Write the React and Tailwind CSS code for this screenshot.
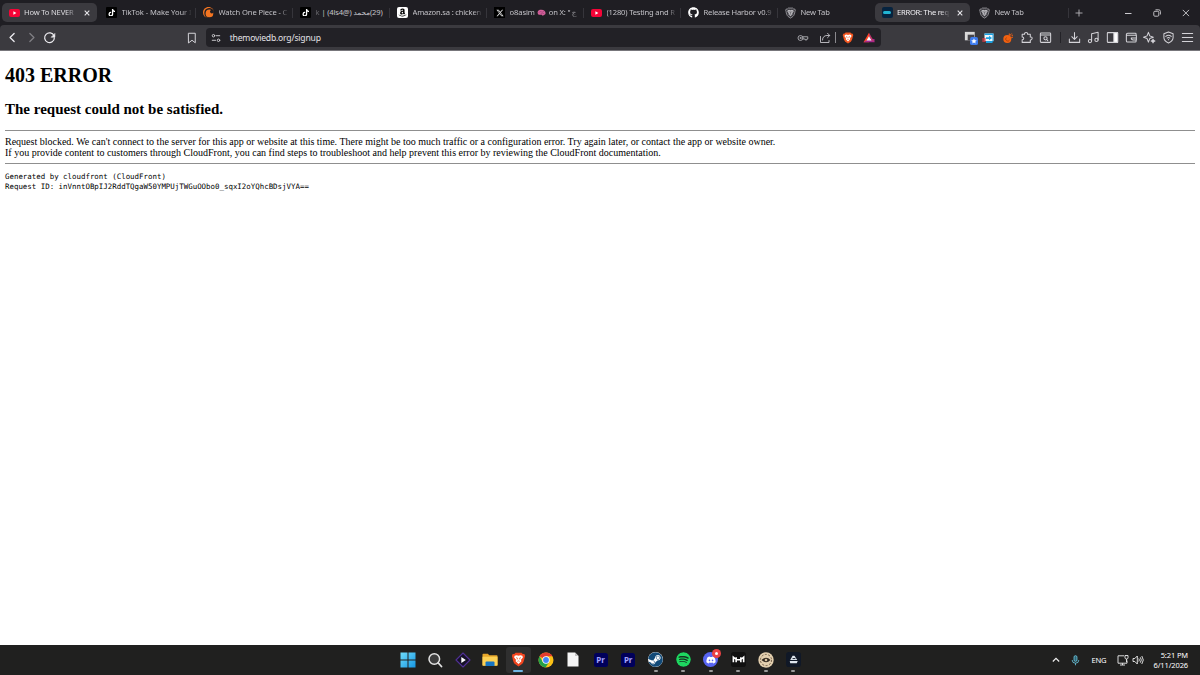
import React from "react";
import { FaTiktok, FaXTwitter, FaGithub, FaSteam, FaSpotify, FaDiscord, FaAmazon } from "react-icons/fa6";
import { SiCrunchyroll } from "react-icons/si";

const SHIELD = "M7.2 1.2 L16.8 1.2 L18.8 3.2 L21.4 3.3 L22.6 6.4 L21.8 8.6 C21 13 20 17 17.6 19.3 L12 23.2 L6.4 19.3 C4 17 3 13 2.2 8.6 L1.4 6.4 L2.6 3.3 L5.2 3.2 Z";
const FACE = "M5.8 6 L9 5 L12 6 L15 5 L18.2 6 L19 8.6 L16 12.4 L16.6 14.6 L12 19 L7.4 14.6 L8 12.4 L5 8.6 Z";

function Brave({ className, body, face, line }) {
  return (
    <svg viewBox="0 0 24 24" className={className}>
      <path d={SHIELD} fill={body} />
      <path d={FACE} fill={face} />
      <path d="M8 9 L10.3 9.7 L10 12 M16 9 L13.7 9.7 L14 12 M10.2 15 L12 14.2 L13.8 15" stroke={line} strokeWidth="1.1" fill="none" />
    </svg>
  );
}

function GreyBrave() {
  return (
    <svg viewBox="0 0 24 24" className="h-[12px] w-[11px]">
      <path d={SHIELD} fill="#3a393f" stroke="#aaa9ae" strokeWidth="1.6" />
      <path d={FACE} fill="#b9b8bd" />
      <path d="M8 9 L10.3 9.7 M16 9 L13.7 9.7 M12 9V13 M10.2 15 L12 14.2 L13.8 15" stroke="#3a393f" strokeWidth="1.2" fill="none" />
    </svg>
  );
}
const YouTube = () => (
  <svg viewBox="0 0 11 8" className="h-2 w-[11px]"><rect width="11" height="8" rx="2" fill="#f50437" /><path d="M4.4 2.2 7.4 4 4.4 5.8z" fill="#fff" /></svg>
);
const TikTok = () => (
  <span className="flex size-[11px] items-center justify-center rounded-[1px] bg-black text-[7.5px] text-white"><FaTiktok /></span>
);

const FADE = "[mask-image:linear-gradient(to_right,#000_calc(100%-10px),transparent)]";

function Tab({ icon, children, active, close, sep = true, fade = true }) {
  return (
    <div className={"flex h-[19px] w-[97px] shrink-0 items-center " + (active ? "" : "text-[#c3c2c7]")}>
      <div className={"flex h-[19px] w-[95px] items-center rounded-[5px] " + (active ? "bg-[#3b3a3f] pl-[6.5px] text-[#dddce0]" : "pl-[7px]")}>
        <span className="flex w-[11px] shrink-0 justify-center">{icon}</span>
        <span className={"ml-[4.5px] block shrink-0 overflow-hidden whitespace-nowrap text-[7.6px] leading-[19px] tracking-[-0.18px] " + (fade ? FADE : "") + (close ? " w-[53px]" : " w-[70px]")}>{children}</span>
        {close && (
          <svg viewBox="0 0 10 10" className="ml-[4.5px] size-[10px]" stroke="#e6e5e9" strokeWidth="1.1"><path d="M2.7 2.7 7.3 7.3M7.3 2.7 2.7 7.3" /></svg>
        )}
      </div>
      {sep && <span className="ml-[0.8px] h-[10px] w-px bg-[#36353b]" />}
    </div>
  );
}

function I({ children, s = 12, w = 1.9, fill = "none", color = "#d4d3d8" }) {
  return (
    <svg width={s} height={s} viewBox="0 0 24 24" fill={fill} stroke={color} strokeWidth={w} strokeLinecap="round" strokeLinejoin="round" className="shrink-0">{children}</svg>
  );
}

function TabStrip() {
  return (
    <div className="flex h-[25px] items-center pl-[2px]">
      <Tab icon={<YouTube />} active close sep={false}>How To NEVER</Tab>
      <Tab icon={<TikTok />}><span className="tracking-[-0.06px]">TikTok - Make Your I</span></Tab>
      <Tab icon={<SiCrunchyroll className="size-[11px] text-[#f47521]" />}><span className="tracking-[-0.12px]">Watch One Piece - C</span></Tab>
      <Tab icon={<TikTok />} fade={false}>
        <span className="flex gap-[2px]"><span className="opacity-40">k</span><span>| (4ls4@)</span><span className="flex"><bdi className="font-['DejaVu_Sans',sans-serif] text-[7.2px] tracking-normal">محمد</bdi><bdi>(29)</bdi></span></span>
      </Tab>
      <Tab icon={<span className="flex size-[11px] items-center justify-center rounded-[2px] bg-white text-[9px] text-black"><FaAmazon /></span>}>Amazon.sa : chicken</Tab>
      <Tab icon={<span className="flex size-[11px] items-center justify-center bg-black text-[8px] text-[#e2e2e2]"><FaXTwitter /></span>}>
        <span className="flex items-center gap-[1.5px]"><span className="tracking-[-0.1px]">o8asim</span>
          <svg viewBox="0 0 10 8" className="mx-px h-[7.5px] w-[9px]"><path d="M1 5C0 3 1.5.8 4 .7 7 .2 9.5 2 9.5 4.5 9.5 6 8.5 6.2 7.5 6.4L6.5 7.5 5.5 6.2C3 6.5 1.500 6.500 1 5z" fill="#d5609b" /><path d="M2 4q1-2 3-1t3-1M4 5q2-1 4 0" stroke="#913a6c" strokeWidth=".6" fill="none" /></svg>
          <span>on X: "</span><bdi className="font-['DejaVu_Sans',sans-serif]">ج</bdi></span>
      </Tab>
      <Tab icon={<YouTube />}>(1280) Testing and R</Tab>
      <Tab icon={<FaGithub className="size-[11px] text-white" />}>Release Harbor v0.9</Tab>
      <Tab icon={<GreyBrave />} sep={false}>New Tab</Tab>
      <Tab active close sep={false} icon={<span className="flex size-[11px] items-center justify-center rounded-[2px] bg-[#06233f]"><span className="h-[3px] w-[8px] rounded-full bg-[#21b4d2]" /></span>}>
        <span className="tracking-[-0.26px] text-[#f0eff3]">ERROR: The req</span>
      </Tab>
      <Tab icon={<GreyBrave />}>New Tab</Tab>
      <svg viewBox="0 0 10 10" className="ml-[5px] size-[10px]" stroke="#b5b4b9" strokeWidth="0.9"><path d="M5 1.500V8.500M1.500 5H8.500" /></svg>
      <div className="ml-auto flex items-center">
        <svg width="28.7" height="12" viewBox="0 0 28.7 12" stroke="#d0cfd4" strokeWidth="1"><path d="M11 6.500h6.500" /></svg>
        <svg width="28.7" height="12" viewBox="0 0 28.7 12" fill="none" stroke="#d0cfd4" strokeWidth=".9"><rect x="10.800" y="4.300" width="5" height="4.900" rx="1" /><path d="M12.500 2.800h3.200q1.700 0 1.700 1.700V7.500" /></svg>
        <svg width="28.7" height="12" viewBox="0 0 28.7 12" stroke="#d0cfd4" strokeWidth=".9"><path d="M11.800 2.900 18 9.100M18 2.900 11.800 9.100" /></svg>
      </div>
    </div>
  );
}

const Cell = ({ children }) => <span className="flex w-[18.7px] shrink-0 items-center justify-center">{children}</span>;

function Toolbar() {
  return (
    <div className="flex h-[25px] items-center rounded-t-[4px] bg-[#3b3a3f]">
      <span className="ml-[3.500px] flex"><Cell><I s={13} w={2.4} color="#ecebef"><path d="M15 4.500 7.500 12l7.500 7.500" /></I></Cell></span>
      <span className="opacity-45"><Cell><I s={13} w={2.300}><path d="M9 4.500 16.500 12 9 19.500" /></I></Cell></span>
      <span className="-ml-[0.700px] flex"><Cell><I s={13} w={2.300} color="#ecebef"><path d="M20.300 9A9 9 0 1 0 21 12.500" /><path d="M22 5v6.500h-6.500z" fill="#ecebef" strokeWidth="1" /></I></Cell></span>
      <span className="ml-[123.600px]"><Cell><I s={12} w={2}><path d="M5.500 2.500h13v19L12 16.500 5.500 21.500z" /></I></Cell></span>
      <div className="ml-[4.500px] flex h-[19px] w-[675px] items-center rounded-[4px] bg-[#222126] pl-[5px]">
        <I s={10} w={2.2}><circle cx="6" cy="6.500" r="3" /><path d="M13 6.500h8M3 17.500h8" /><circle cx="18" cy="17.500" r="3" /></I>
        <span className="ml-[9px] pt-px text-[8.600px] leading-[20px] tracking-[-0.200px] text-[#e3e2e7]">themoviedb.org/signup</span>
        <span className="ml-auto flex items-center">
          <I s={12} w={1.700} color="#b4b3b8"><circle cx="7" cy="12" r="5" /><circle cx="7" cy="12" r="1.200" /><path d="M12 9.500h9.500v4.500h-2v2h-3v-2h-4" /></I>
          <span className="ml-[9.500px] flex"><I s={12} w={1.800} color="#c4c3c8"><path d="M3 9v12h17v-4M7 16c0-6 4-9 9-9h5M17 2.500 21.500 7 17 11.500" /></I></span>
          <span className="ml-[4px] h-[11px] w-px bg-[#8a898e]" />
          <Brave className="ml-[6px] size-[12px]" body="#f2551f" face="#fff" line="#f2551f" />
          <svg viewBox="0 0 12 12" className="mr-[6px] ml-[9px] size-[12px]"><path d="M6 .8 .5 10.200H6z" fill="#ff4724" /><path d="M.5 10.200 6 7h5.500v3.200z" fill="#a3278f" /><path d="M6 .8 11.500 10.200 8.500 8.500 6 4.500z" fill="#c0356a" /><path d="M6 4.200 8.500 8.400H3.500z" fill="#fff" /></svg>
        </span>
      </div>
      <div className="ml-[80.500px] flex items-center">
        <Cell><svg viewBox="0 0 16 16" className="size-[15px]"><rect x="2" y="2" width="10.500" height="9" fill="#d9d9d9" /><rect x="5" y="5" width="7" height="6" fill="#45444a" /><rect x="7.500" y="7.500" width="8.500" height="8.500" rx="2" fill="#3d7cf0" /><path d="m11.700 8.900.9 1.900 2 .2-1.500 1.400.4 2-1.800-1-1.800 1 .4-2-1.500-1.400 2-.2z" fill="#fff" /></svg></Cell>
        <span className="-ml-[1px] mr-[1px] flex"><Cell><svg viewBox="0 0 12 12" className="size-[12px]"><rect x="2.500" y="1.500" width="9" height="7.500" fill="#eef7fc" /><path d="M2.500 1.500h9v1.500h-9zM10.500 1.500h1v8h-1zM4 9h6.500v2H4z" fill="#1ba1e2" /><path d="M4 5.200h3V3.800L10 6 7 8.300V6.900H4z" fill="#1ba1e2" /><path d="M.5 6h1.200v4H.5zM2.300 6h1.200v4H2.300z" fill="#df3945" /></svg></Cell></span>
        <Cell><svg viewBox="0 0 12 12" className="size-[12px]"><circle cx="5.300" cy="7" r="4" fill="#f26110" /><path d="M4.500 5.500a2 2 0 1 0 3 2.500" stroke="#a03c0c" strokeWidth=".8" fill="none" /><path d="M7 4.500 9.700 1.500M9 6l2-1M7.300 3V1.500M9.500 3.800l1.500-.8" stroke="#f26110" strokeWidth="1" /></svg></Cell>
        <Cell><I s={13}><path d="M4 6h4.500c-1-4.500 6.500-4.500 5.500 0h5v5c4.500-1 4.500 6 0 5.500V21H4v-5c4 0 4-5 0-5z" /></I></Cell>
        <Cell><I s={13}><rect x="2.500" y="3.500" width="19" height="17.500" rx="1.500" /><path d="M3 7.500h18" /><circle cx="12" cy="13.500" r="3" /><path d="m14.200 15.700 2 2" /></I></Cell>
        <span className="mx-[5px] h-[11px] w-px bg-[#232227]" />
        <Cell><I s={13}><path d="M12 3v12M7 10.500l5 5 5-5M2.500 15v6h19v-6" /></I></Cell>
        <Cell><I s={13}><circle cx="5.500" cy="18.500" r="3" /><circle cx="17.500" cy="16.500" r="3" /><path d="M8.500 18.500V5l12-2.500v14" /></I></Cell>
        <Cell><I s={13}><rect x="2.500" y="3" width="19" height="18" rx="1" /><path d="M14.500 3h7v18h-7z" fill="#fff" /></I></Cell>
        <Cell><I s={13}><path d="M20.500 8V5.500q0-1.500-1.500-1.500H5Q2.500 4 2.500 6.500V18q0 2.500 2.500 2.500h14q1.500 0 1.500-1.500v-2.500M2.500 8h18.500v8.500h-6q-3.500 0-3.500-3.500h9.500" /></I></Cell>
        <Cell><I s={13}><path d="M10 2.500 12.500 9 19 11.500 12.500 14 10 20.500 7.500 14 1 11.500 7.500 9z" /><path d="m18.500 15 1 2.500 2.500 1-2.500 1-1 2.500-1-2.500-2.500-1 2.500-1z" fill="#d4d3d8" /></I></Cell>
        <Cell><I s={13}><path d="M12 1.800 20.500 5v7q0 6.500-8.500 10.200Q3.500 18.500 3.500 12V5zM7 10q5-4 10 0M9.500 13q2.500-2 5 0M12 15.800v.2" /></I></Cell>
        <Cell><I s={13}><path d="M2.500 4.500h19M2.500 12h19M2.500 19.500h19" /></I></Cell>
      </div>
    </div>
  );
}

function TaskIcon({ children, dot, active }) {
  return (
    <div className="flex h-[30px] w-[27.520px] flex-col items-center">
      <div className={"mt-[2px] flex h-[26px] w-[25px] flex-col items-center rounded-[3px] " + (active ? "bg-[#2f2f2f]" : "")}>
        <span className="flex h-[25px] items-center justify-center">{children}</span>
        {active && <span className="-mt-[2px] h-[2px] w-[10px] shrink-0 rounded-full bg-[#6fb6e4]" />}
        {dot && <span className="-mt-[2px] h-[2px] w-[4px] shrink-0 rounded-full bg-[#9b9b9b]" />}
      </div>
    </div>
  );
}
const Premiere = () => <span className="flex size-[14px] items-center justify-center rounded-[2.500px] bg-[#00005b] text-[8px] font-bold leading-none tracking-[-0.100px] text-[#a5a5ff]">Pr</span>;

function Taskbar() {
  return (
    <div className="flex h-[30px] items-center bg-[#20201f] text-white">
      <div className="ml-[394.200px] flex">
        <TaskIcon><svg viewBox="0 0 16 16" className="size-[16px]"><defs><linearGradient id="w" x2="1" y2="1"><stop stopColor="#6fdcfb" /><stop offset="1" stopColor="#1595e2" /></linearGradient></defs><path d="M.5.5h7v7h-7zM8.500.5h7v7h-7zM.5 8.500h7v7h-7zM8.500 8.500h7v7h-7z" fill="url(#w)" /></svg></TaskIcon>
        <TaskIcon><svg viewBox="0 0 16 16" className="size-[16px]" fill="none" stroke="#e2e2e2"><circle cx="7.300" cy="7" r="5.300" fill="#3d3d3d" strokeWidth="1.500" /><path d="m11.300 11 3.200 3.500" strokeWidth="1.800" strokeLinecap="round" /></svg></TaskIcon>
        <TaskIcon><svg viewBox="0 0 16 16" className="size-[16px]"><path d="M8 1 15 8 8 15 1 8z" fill="#151126" stroke="#503095" strokeWidth="1.100" strokeLinejoin="round" /><path d="M6.300 5 10.800 8 6.300 11z" fill="#fff" /></svg></TaskIcon>
        <TaskIcon><svg viewBox="0 0 16 16" className="size-[16px]"><path d="M.5 2.500q0-.8.8-.8h4.500l1.500 1.500h7.400q.8 0 .8.800V13.500H.5z" fill="#e7a72b" /><path d="M.5 4.800h15V13q0 .8-.8.8H1.300q-.8 0-.8-.8z" fill="#fbd055" /><path d="M3.500 14V10.500q0-1 1-1h7q1 0 1 1V14z" fill="#1574c4" /></svg></TaskIcon>
        <TaskIcon active><Brave className="size-[15px]" body="#f2451f" face="#fff" line="#f2551f" /></TaskIcon>
        <TaskIcon><svg viewBox="0 0 16 16" className="size-[16px]"><circle cx="8" cy="8" r="7.500" fill="#fbc116" /><path d="M8 8 1.500 4.250A7.500 7.500 0 0 1 14.500 4.250H8z" fill="#e33b2e" /><path d="M1.500 4.250A7.500 7.500 0 0 0 7.500 15.480L11.200 9.900 8 8 4.800 9.900z" fill="#24a148" /><circle cx="8" cy="8" r="3.700" fill="#fff" /><circle cx="8" cy="8" r="2.900" fill="#4285f4" /></svg></TaskIcon>
        <TaskIcon><svg viewBox="0 0 12 15" className="h-[15px] w-[12px]"><path d="M.5.5h7.500l3.500 3.500v10.500H.5z" fill="#f5f5f5" /><path d="M8 .5v3.500h3.500z" fill="#c2c2c2" /></svg></TaskIcon>
        <TaskIcon><Premiere /></TaskIcon>
        <TaskIcon><Premiere /></TaskIcon>
        <TaskIcon dot><span className="flex size-[15px] items-center justify-center rounded-full bg-white"><svg viewBox="0 0 16 16" className="hidden"><defs><linearGradient id="steam" x2="0" y2="1"><stop stopColor="#111d2e" /><stop offset="1" stopColor="#1387b8" /></linearGradient></defs></svg><FaSteam className="size-[15px] text-[#124a78]" /></span></TaskIcon>
        <TaskIcon dot><FaSpotify className="size-[15px] rounded-full bg-[#15311f] text-[#1ed760]" /></TaskIcon>
        <TaskIcon dot><span className="relative flex size-[15px] items-center justify-center rounded-full bg-[#5865f2] text-[10px] text-white"><FaDiscord /><span className="absolute -top-[3px] -right-[3px] flex size-[9px] items-center justify-center rounded-full bg-[#ec4245]"><span className="size-[3px] rounded-full bg-white" /></span></span></TaskIcon>
        <TaskIcon dot><svg viewBox="0 0 16 16" className="size-[15px]"><rect width="16" height="16" rx="3" fill="#111" /><path d="M2.500 11V5.500L5.500 8M5.500 11V5.500M13.500 11V5.500L10.500 8M10.500 11V5.500M5.500 8.300h5" fill="none" stroke="#fff" strokeWidth="1.700" /></svg></TaskIcon>
        <TaskIcon dot><svg viewBox="0 0 16 16" className="size-[16px]"><circle cx="8" cy="8" r="7.700" fill="#e3cfae" /><circle cx="8" cy="8" r="5.600" fill="none" stroke="#66533f" strokeWidth=".9" strokeDasharray="2 1.500" /><path d="M3.500 8q4.500-4.500 9 0-4.500 4.500-9 0z" fill="#30271e" /><circle cx="8" cy="8" r="1.300" fill="#d8c29e" /></svg></TaskIcon>
        <TaskIcon dot><svg viewBox="0 0 16 16" className="size-[15px]"><rect width="16" height="16" rx="3" fill="#101827" /><path d="M7 4h2l3 4.500H4.500zM4 9.700h8.500L11.500 12H4.500z" fill="#dfe6ee" /><path d="M7 7h3" stroke="#101827" strokeWidth="1" /></svg></TaskIcon>
      </div>
      <div className="ml-auto flex items-center pr-[12px]">
        <svg viewBox="0 0 8 8" className="size-[8px]" fill="none" stroke="#eee" strokeWidth="1.200"><path d="M.8 5.500 4 2.300 7.200 5.500" /></svg>
        <svg viewBox="0 0 10 12" className="ml-[11.500px] h-[11px] w-[9px]" fill="none" stroke="#67bdd4" strokeWidth="1"><rect x="3.400" y=".6" width="3.200" height="6.400" rx="1.600" fill="#2e6475" /><path d="M1.300 5.500q0 3.500 3.700 3.500t3.700-3.500M5 9v2.300" /></svg>
        <span className="ml-[11.500px] w-[15px] pt-px text-[7.600px] tracking-[-0.200px]">ENG</span>
        <svg viewBox="0 0 12 12" className="ml-[10.500px] size-[12px]" fill="none" stroke="#eee" strokeWidth=".9"><path d="M7 1.800H1v7.400h9V6.500M3 11h5M5.500 9.200V11M8 1.500h3v2.300q0 1.200-1.500 1.200T8 3.800zM9.500 5v3" /></svg>
        <svg viewBox="0 0 12 12" className="ml-[3px] size-[12px]" fill="none" stroke="#eee" strokeWidth=".9"><path d="M1 4.500h1.800L5.300 2v8L2.800 7.500H1zM6.800 4.500q1 1.500 0 3M8.300 3.300q2 2.700 0 5.400M9.800 2q3 4 0 8" /></svg>
        <div className="ml-[8px] w-[36px] whitespace-nowrap text-right text-[7.500px] leading-[10px] tracking-[-0.120px]"><div>5:21 PM</div><div>6/11/2026</div></div>
      </div>
    </div>
  );
}

export default function App() {
  return (
    <div className="flex h-[675px] w-[1200px] flex-col overflow-hidden bg-white font-['Noto_Sans','Open_Sans',sans-serif]">
      <header className="shrink-0 border-b border-[#77767b] bg-[#1f1e23]">
        <TabStrip />
        <Toolbar />
      </header>
      <main className="flex-1 px-[5px] font-['Liberation_Serif',serif] text-[10px] text-black">
        <h1 className="mt-[13px] text-[20px] font-bold leading-[23px]">403 ERROR</h1>
        <h2 className="mt-[14px] text-[15px] font-bold leading-[17px]">The request could not be satisfied.</h2>
        <hr className="mt-[12px] border-t border-[#8f8f8f]" />
        <p className="mt-[5px] leading-[11px]">Request blocked. We can't connect to the server for this app or website at this time. There might be too much traffic or a configuration error. Try again later, or contact the app or website owner.<br />If you provide content to customers through CloudFront, you can find steps to troubleshoot and help prevent this error by reviewing the CloudFront documentation.</p>
        <hr className="mt-[5px] border-t border-[#8f8f8f]" />
        <pre className="mt-[8px] font-['DejaVu_Sans_Mono',monospace] text-[7.430px] leading-[9.500px]">{"Generated by cloudfront (CloudFront)\nRequest ID: inVnntOBpIJ2RddTQgaW50YMPUjTWGuOObo0_sqxI2oYQhcBDsjVYA=="}</pre>
      </main>
      <Taskbar />
    </div>
  );
}
